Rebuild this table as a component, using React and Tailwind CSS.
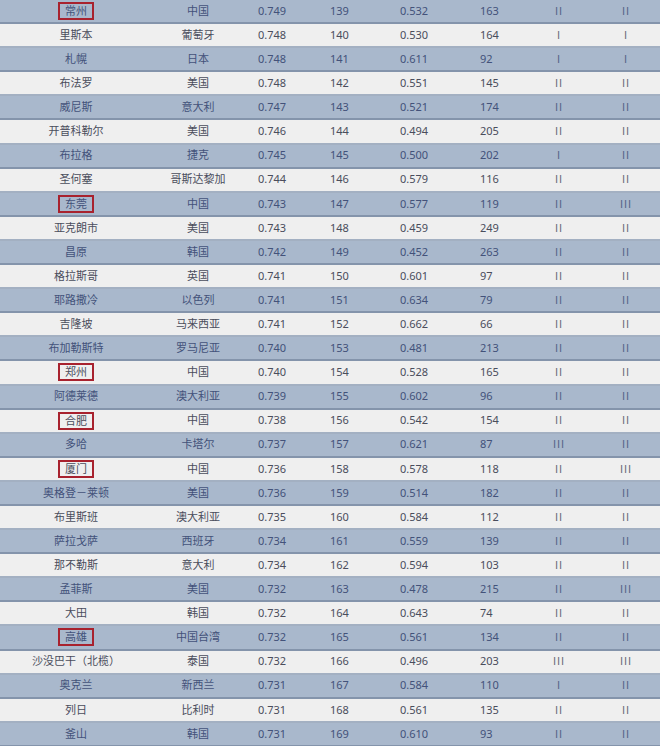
const rows = [
    ["常州", "中国", "0.749", "139", "0.532", "163", "II", "II", true],
    ["里斯本", "葡萄牙", "0.748", "140", "0.530", "164", "I", "I"],
    ["札幌", "日本", "0.748", "141", "0.611", "92", "I", "I"],
    ["布法罗", "美国", "0.748", "142", "0.551", "145", "II", "II"],
    ["威尼斯", "意大利", "0.747", "143", "0.521", "174", "II", "II"],
    ["开普科勒尔", "美国", "0.746", "144", "0.494", "205", "II", "II"],
    ["布拉格", "捷克", "0.745", "145", "0.500", "202", "I", "II"],
    ["圣何塞", "哥斯达黎加", "0.744", "146", "0.579", "116", "II", "II"],
    ["东莞", "中国", "0.743", "147", "0.577", "119", "II", "III", true],
    ["亚克朗市", "美国", "0.743", "148", "0.459", "249", "II", "II"],
    ["昌原", "韩国", "0.742", "149", "0.452", "263", "II", "II"],
    ["格拉斯哥", "英国", "0.741", "150", "0.601", "97", "II", "II"],
    ["耶路撒冷", "以色列", "0.741", "151", "0.634", "79", "II", "II"],
    ["吉隆坡", "马来西亚", "0.741", "152", "0.662", "66", "II", "II"],
    ["布加勒斯特", "罗马尼亚", "0.740", "153", "0.481", "213", "II", "II"],
    ["郑州", "中国", "0.740", "154", "0.528", "165", "II", "II", true],
    ["阿德莱德", "澳大利亚", "0.739", "155", "0.602", "96", "II", "II"],
    ["合肥", "中国", "0.738", "156", "0.542", "154", "II", "II", true],
    ["多哈", "卡塔尔", "0.737", "157", "0.621", "87", "III", "II"],
    ["厦门", "中国", "0.736", "158", "0.578", "118", "II", "III", true],
    ["奥格登－莱顿", "美国", "0.736", "159", "0.514", "182", "II", "II"],
    ["布里斯班", "澳大利亚", "0.735", "160", "0.584", "112", "II", "II"],
    ["萨拉戈萨", "西班牙", "0.734", "161", "0.559", "139", "II", "II"],
    ["那不勒斯", "意大利", "0.734", "162", "0.594", "103", "II", "II"],
    ["孟菲斯", "美国", "0.732", "163", "0.478", "215", "II", "III"],
    ["大田", "韩国", "0.732", "164", "0.643", "74", "II", "II"],
    ["高雄", "中国台湾", "0.732", "165", "0.561", "134", "II", "II", true],
    ["沙没巴干（北榄）", "泰国", "0.732", "166", "0.496", "203", "III", "III"],
    ["奥克兰", "新西兰", "0.731", "167", "0.584", "110", "I", "II"],
    ["列日", "比利时", "0.731", "168", "0.561", "135", "II", "II"],
    ["釜山", "韩国", "0.731", "169", "0.610", "93", "II", "II"],
];

function Row({ r, dark }) {
    const [city, country, a, b, c, d, e, f, boxed] = r;
    return (
        <div
            className={
                "grid grid-cols-[152px_92px_72px_70px_80px_60px_66px_68px] items-center h-[24.1px] border-b-2 " +
                (dark
                    ? "bg-[#a9b8cc] border-[#8494ab] text-[#43527a]"
                    : "bg-[#efefef] border-[#a3b0c2] text-[#4a4d5c]")
            }
        >
            <div className="flex justify-center">
                {boxed ? (
                    <span className="border-2 border-[#a8222e] px-[5px] leading-[14px]">{city}</span>
                ) : (
                    <span>{city}</span>
                )}
            </div>
            <div className="text-center">{country}</div>
            <div className="pl-[14px]">{a}</div>
            <div className="pl-[14px]">{b}</div>
            <div className="pl-[14px]">{c}</div>
            <div className="pl-[14px]">{d}</div>
            <div className="text-center font-['Liberation_Sans',sans-serif] tracking-[1px] opacity-80">{e}</div>
            <div className="text-center font-['Liberation_Sans',sans-serif] tracking-[1px] opacity-80">{f}</div>
        </div>
    );
}

export default function App() {
    return (
        <div className="w-[660px] h-[746px] overflow-hidden bg-[#efefef] text-[11px] font-['Noto_Sans','Noto_Sans_CJK_SC',sans-serif]">
            {rows.map((r, i) => (
                <Row key={i} r={r} dark={i % 2 === 0} />
            ))}
        </div>
    );
}
